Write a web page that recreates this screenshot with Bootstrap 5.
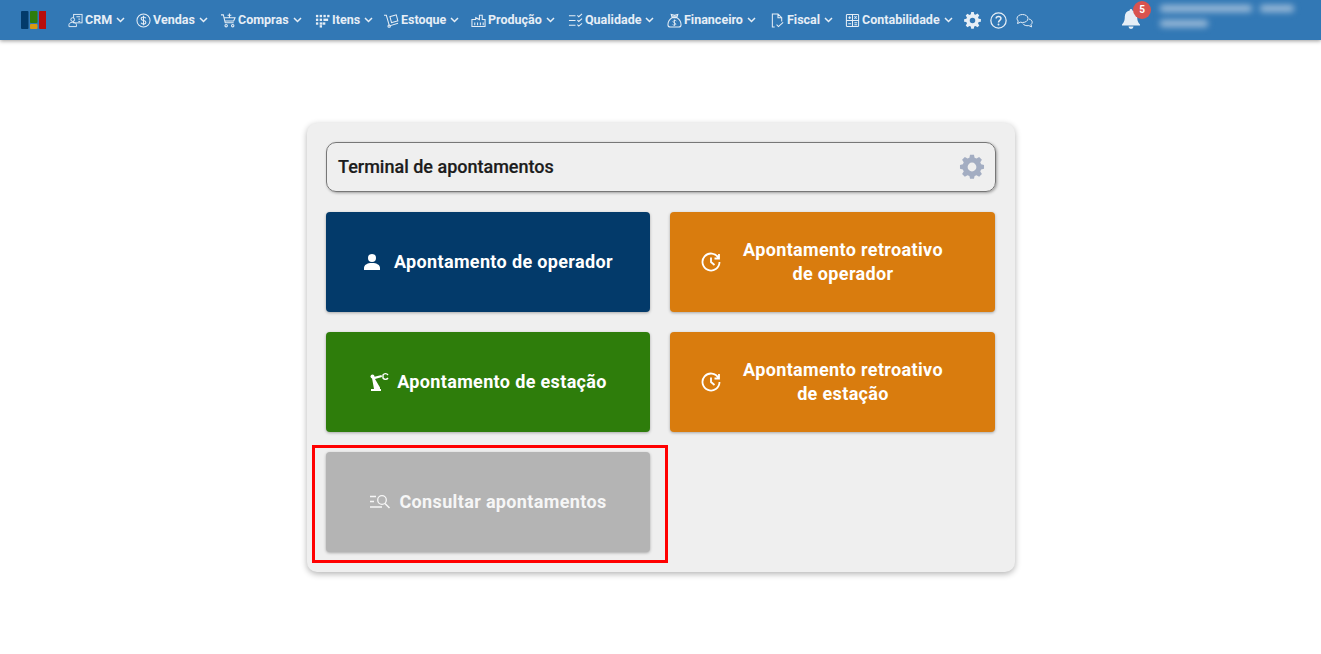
<!DOCTYPE html>
<html lang="pt-BR">
<head>
<meta charset="utf-8">
<title>Terminal de apontamentos</title>
<link href="https://cdn.jsdelivr.net/npm/bootstrap@5.3.0/dist/css/bootstrap.min.css" rel="stylesheet">
<style>
html,body{height:100%;margin:0;background:#fff;overflow:hidden}
body{font-family:Roboto,"Liberation Sans",sans-serif}
.topbar{height:40px;background:#3278b5;box-shadow:0 1px 4px rgba(0,0,0,.4);padding-left:21px;color:#e6eef6;font-size:12.5px;font-weight:700;position:relative}
.brandmark{width:25px;height:18px;margin-right:22px;flex:none}
.menu-entry{display:flex;align-items:center;white-space:nowrap;flex:none}
.menu-entry svg.ico{width:15px;height:15px;margin-right:2px;flex:none}
.menu-entry svg.chev{width:9px;height:6px;margin-left:4px;flex:none}
.w-crm{width:68px}.w-ven{width:85px}.w-com{width:94px}.w-ite{width:69px}.w-est{width:87px}.w-pro{width:97px}.w-qua{width:99px}.w-fin{width:103px}.w-fis{width:75px}.w-con{width:119px}
.tool-ico{width:26px;display:flex;flex:none}
.tool-ico svg{width:17px;height:17px}
.bell-wrap{margin-left:80px;width:38px;height:22px;flex:none}
.bell-wrap svg{width:18px;height:20px;display:block}
.bell-count{position:absolute;left:11px;top:-8px;width:18px;height:18px;border-radius:50%;background:#d9534f;color:#fff;font-size:10px;font-weight:700;line-height:18px;text-align:center}
.blur-user{width:134px;height:30px;filter:blur(3px)}
.blur-user i{display:block;height:7px;background:#9dbcd9;border-radius:3px}
.stage{width:708px;margin:83px 0 0 307px;height:449px;background:#efefef;border-radius:10px;padding:19px;box-shadow:0 2px 6px rgba(0,0,0,.3);position:relative}
.term-head{height:50px;border:1px solid #777;border-radius:10px;box-shadow:1px 1px 3px rgba(0,0,0,.35);padding:0 10px 0 11px;margin-bottom:20px}
.term-head h1{font-size:18px;font-weight:500;margin:0;color:#1c1c1c;font-family:Roboto,sans-serif;-webkit-text-stroke:.2px #1c1c1c}
.term-head svg{width:26px;height:26px}
.tile-grid{display:grid;grid-template-columns:324px 325px;gap:20px;grid-auto-rows:100px}
.tile{border:0;border-radius:4px;color:#fff;font-size:18px;font-weight:700;letter-spacing:.35px;line-height:24px;box-shadow:0 1px 3px rgba(0,0,0,.3);display:flex;align-items:center;justify-content:center;padding:0;text-align:center}
.tile svg{flex:none}
.t-blue{background:#033a6a}.t-orange{background:#d97c0e}.t-green{background:#2e7d0b}.t-gray{background:#b4b4b4;color:#f6f6f6}
.retro{padding:0 30px 0 31px;justify-content:flex-start}
.retro span{flex:1}
.mark-box{position:absolute;left:5px;top:322px;width:356px;height:118px;border:3px solid #f00;pointer-events:none}
</style>
</head>
<body>
<nav class="topbar d-flex align-items-center">
  <svg class="brandmark" viewBox="0 0 25 18"><rect x="0" y="0" width="7.5" height="18" rx="1" fill="#033a6a"/><rect x="9" y="0" width="7.5" height="12" rx="1" fill="#2e7d0b"/><rect x="9" y="13" width="7.5" height="5" rx="1" fill="#d99a12"/><rect x="18" y="0" width="7.5" height="18" rx="1" fill="#b80d0d"/></svg>
  <div class="menu-entry w-crm"><svg class="ico" viewBox="0 0 16 16" fill="none" stroke="#e6eef6" stroke-width="1"><rect x="6" y="1.5" width="9" height="9" /><circle cx="5" cy="7" r="2" fill="#3278b5"/><path d="M1 14.5v-2c0-1.500 1.500-2.500 4-2.500s4 1 4 2.500v2zM9 4h4M11 6.500h2M11 9h2"/></svg>CRM<svg class="chev" viewBox="0 0 9 6" fill="none" stroke="#e6eef6" stroke-width="1.500"><path d="M1 1l3.500 3.500L8 1"/></svg></div>
  <div class="menu-entry w-ven"><svg class="ico" viewBox="0 0 16 16" fill="none" stroke="#e6eef6" stroke-width="1.100"><circle cx="8" cy="8" r="7"/><path d="M10.500 5.500C10 4.500 9 4.200 8 4.200c-1.500 0-2.500.8-2.500 1.900C5.500 8.800 10.500 7 10.500 9.900c0 1.100-1 1.900-2.500 1.900-1 0-2.100-.4-2.600-1.400M8 3v10"/></svg>Vendas<svg class="chev" viewBox="0 0 9 6" fill="none" stroke="#e6eef6" stroke-width="1.500"><path d="M1 1l3.500 3.500L8 1"/></svg></div>
  <div class="menu-entry w-com"><svg class="ico" viewBox="0 0 16 16" fill="none" stroke="#e6eef6" stroke-width="1.100"><path d="M0 2h2.500l2 8.500h9M3.200 5H15l-1.500 3.500H4.200M9 .5v4M7 2.500h4"/><circle cx="5.500" cy="13.500" r="1.300"/><circle cx="12.500" cy="13.500" r="1.300"/></svg>Compras<svg class="chev" viewBox="0 0 9 6" fill="none" stroke="#e6eef6" stroke-width="1.500"><path d="M1 1l3.500 3.500L8 1"/></svg></div>
  <div class="menu-entry w-ite"><svg class="ico" viewBox="0 0 16 16" fill="#e6eef6"><rect x="1" y="2" width="2.500" height="2.500"/><rect x="5" y="2" width="2.500" height="2.500"/><rect x="9" y="2" width="2.500" height="2.500"/><rect x="13" y="2" width="2.500" height="2.500"/><rect x="1" y="6" width="2.500" height="2.500"/><rect x="5" y="6" width="2.500" height="2.500"/><rect x="9" y="6" width="5" height="2.500"/><rect x="1" y="10" width="2.500" height="2.500"/><rect x="5" y="10" width="2.500" height="2.500"/><rect x="8" y="10" width="3" height="2.500"/><rect x="5" y="13" width="2.500" height="2.500"/></svg>Itens<svg class="chev" viewBox="0 0 9 6" fill="none" stroke="#e6eef6" stroke-width="1.500"><path d="M1 1l3.500 3.500L8 1"/></svg></div>
  <div class="menu-entry w-est"><svg class="ico" viewBox="0 0 16 16" fill="none" stroke="#e6eef6" stroke-width="1.100"><path d="M0 2.500h2.500l3 10.500M5 14l10-3"/><rect x="7" y="3" width="7" height="6.500" transform="rotate(-15 10 6)"/><circle cx="5.500" cy="14" r="1.300"/></svg>Estoque<svg class="chev" viewBox="0 0 9 6" fill="none" stroke="#e6eef6" stroke-width="1.500"><path d="M1 1l3.500 3.500L8 1"/></svg></div>
  <div class="menu-entry w-pro"><svg class="ico" viewBox="0 0 16 16" fill="none" stroke="#e6eef6" stroke-width="1.100"><path d="M1 14.500V7l4 0V5l4 2V2.500h3V7l3 0v7.500zM4 10v3M7 10v3M10 10v3M13 10v3"/></svg>Produção<svg class="chev" viewBox="0 0 9 6" fill="none" stroke="#e6eef6" stroke-width="1.500"><path d="M1 1l3.500 3.500L8 1"/></svg></div>
  <div class="menu-entry w-qua"><svg class="ico" viewBox="0 0 16 16" fill="none" stroke="#e6eef6" stroke-width="1.100"><path d="M1 3h7M1 8h7M1 13h7M10 2.500l1.500 1.500L15 1M10 7.500L11.500 9 15 6M10 12.500l1.500 1.500 3.500-3"/></svg>Qualidade<svg class="chev" viewBox="0 0 9 6" fill="none" stroke="#e6eef6" stroke-width="1.500"><path d="M1 1l3.500 3.500L8 1"/></svg></div>
  <div class="menu-entry w-fin"><svg class="ico" viewBox="0 0 16 16" fill="none" stroke="#e6eef6" stroke-width="1.100"><path d="M5.500 5C2.500 7 1 10 1 12.500 1 14 2 15 3.500 15h9c1.500 0 2.500-1 2.500-2.500C15 10 13.500 7 10.500 5zM5.500 5L4.500 1.500 8 2.500l3.500-1L10.500 5M5.500 4h5"/><path d="M10 8.500C9.500 7.800 7 7.500 6.500 9s3.500 1.500 3 3-3 1-3.500.3M8 7v6.500" stroke-width=".9"/></svg>Financeiro<svg class="chev" viewBox="0 0 9 6" fill="none" stroke="#e6eef6" stroke-width="1.500"><path d="M1 1l3.500 3.500L8 1"/></svg></div>
  <div class="menu-entry w-fis"><svg class="ico" viewBox="0 0 16 16" fill="none" stroke="#e6eef6" stroke-width="1.100"><path d="M5 15H2.500V1h6l4 4v4M8.500 1v4h4M7 12.500l2 2 5-4.500"/></svg>Fiscal<svg class="chev" viewBox="0 0 9 6" fill="none" stroke="#e6eef6" stroke-width="1.500"><path d="M1 1l3.500 3.500L8 1"/></svg></div>
  <div class="menu-entry w-con"><svg class="ico" viewBox="0 0 16 16" fill="none" stroke="#e6eef6" stroke-width="1.100"><rect x="1.500" y="1.500" width="13" height="13" rx="1"/><path d="M1.500 8h13M8 1.500v13M3.500 5h3M5 3.500v3M10 3.500l2.500 2.500M12.500 3.500L10 6M3.500 11.500h3M10 10.500h3M10 12.500h3"/></svg>Contabilidade<svg class="chev" viewBox="0 0 9 6" fill="none" stroke="#e6eef6" stroke-width="1.500"><path d="M1 1l3.500 3.500L8 1"/></svg></div>
  <div class="tool-ico"><svg viewBox="0 0 16 16"><path fill="#e6eef6" fill-rule="evenodd" d="M6.800 0h2.400l.4 2.100 1.300.6 1.800-1.200 1.700 1.700-1.200 1.800.6 1.300 2.100.4v2.400l-2.100.4-.6 1.300 1.200 1.800-1.700 1.700-1.800-1.200-1.300.6-.4 2.100H6.800l-.4-2.100-1.300-.6-1.800 1.200-1.700-1.700 1.200-1.800-.6-1.300L.1 9.200V6.800l2.100-.4.6-1.300L1.600 3.300l1.700-1.700 1.800 1.200 1.300-.6zM8 5.400a2.600 2.600 0 1 0 0 5.200 2.600 2.600 0 0 0 0-5.200z"/></svg></div>
  <div class="tool-ico"><svg viewBox="0 0 16 16" fill="none" stroke="#e6eef6" stroke-width="1.200"><circle cx="8" cy="8" r="7.200"/><path d="M5.800 6.200C5.800 5 6.800 4.200 8 4.200s2.300.8 2.300 2c0 1.800-2.300 1.700-2.300 3.600" stroke-width="1.400"/><circle cx="8" cy="11.800" r=".9" fill="#e6eef6" stroke="none"/></svg></div>
  <div class="tool-ico"><svg viewBox="0 0 17 16" fill="none" stroke="#e6eef6" stroke-width="1"><path d="M6.500 2C3.500 2 1 3.600 1 6c0 1 .5 1.800 1.200 2.500L1.500 11l3-1.300c.6.200 1.300.3 2 .3 3 0 5.500-1.600 5.500-4S9.500 2 6.500 2z"/><path d="M13 6.500c2 .5 3.200 1.700 3.200 3.200 0 1-.5 1.700-1.200 2.300l.6 2.400-2.800-1.300c-2.500.5-5-.4-6-2"/></svg></div>
  <div class="bell-wrap position-relative"><svg viewBox="0 0 18 20"><path fill="#e6eef6" d="M9 0c-.8 0-1.300.6-1.300 1.400C4.700 2 2.800 4.400 2.800 7.500c0 4.500-1 5.800-2.800 8v1h18v-1c-1.800-2.200-2.800-3.500-2.800-8 0-3.100-1.900-5.500-4.900-6.100C10.300.6 9.800 0 9 0zM6.500 17.500a2.500 2.500 0 0 0 5 0z"/></svg><span class="bell-count">5</span></div>
  <div class="blur-user d-flex flex-column gap-2"><div class="d-flex gap-2"><i class="flex-grow-1"></i><i style="width:34px"></i></div><i style="width:48px"></i></div>
</nav>
<main class="stage">
  <div class="term-head d-flex align-items-center justify-content-between">
    <h1>Terminal de apontamentos</h1>
    <svg viewBox="0 0 16 16"><path fill="#a3adc2" fill-rule="evenodd" d="M6.800 1h2.400l.4 1.800 1.200.5 1.600-1 1.700 1.700-1 1.600.5 1.200 1.800.4v2.400l-1.800.4-.5 1.200 1 1.600-1.700 1.700-1.600-1-1.200.5-.4 1.800H6.800l-.4-1.800-1.200-.5-1.600 1-1.700-1.700 1-1.600-.5-1.200-1.800-.4V7.200l1.800-.4.5-1.200-1-1.600 1.700-1.700 1.600 1 1.200-.5zM8 5.800a2.700 2.700 0 1 0 0 5.400 2.700 2.700 0 0 0 0-5.400z" transform="translate(0 -.5)"/></svg>
  </div>
  <div class="tile-grid">
    <button class="tile t-blue"><svg width="18" height="18" viewBox="0 0 18 18" fill="#fff" class="me-2"><circle cx="9" cy="5" r="4"/><path d="M1 17v-2c0-3 3-5 8-5s8 2 8 5v2z"/></svg><span>&nbsp;Apontamento de operador</span></button>
    <button class="tile t-orange retro"><svg width="20" height="20" viewBox="0 0 20 20" fill="none" stroke="#fff" stroke-width="1.800"><path d="M17.500 6A8.500 8.500 0 1 0 18.500 10M18 2v4.500h-4.500M10 5.500V10l3.500 3"/></svg><span>Apontamento retroativo<br>de operador</span></button>
    <button class="tile t-green"><svg width="20" height="20" viewBox="0 0 20 20" fill="#fff" class="me-2"><path d="M2 19v-2h3L3 6l1.500-1 8-2 .5 2-7 2 5 8.500V17h1v2z"/><circle cx="3.500" cy="4.500" r="2"/><path d="M19 3a3 3 0 0 0-5 0v3a3 3 0 0 0 5 0" fill="none" stroke="#fff" stroke-width="1.400"/></svg><span>Apontamento de estação</span></button>
    <button class="tile t-orange retro"><svg width="20" height="20" viewBox="0 0 20 20" fill="none" stroke="#fff" stroke-width="1.800"><path d="M17.500 6A8.500 8.500 0 1 0 18.500 10M18 2v4.500h-4.500M10 5.500V10l3.500 3"/></svg><span>Apontamento retroativo<br>de estação</span></button>
    <button class="tile t-gray"><svg width="22" height="16" viewBox="0 0 22 16" fill="none" stroke="#f6f6f6" stroke-width="1.300" class="me-2"><path d="M1 2.500h6M1 7.500h4M1 13h12"/><circle cx="13" cy="6" r="4.300"/><path d="M16 9.500l4.500 4.500" stroke-width="1.600"/></svg><span>Consultar apontamentos</span></button>
  </div>
  <div class="mark-box"></div>
</main>
</body>
</html>
